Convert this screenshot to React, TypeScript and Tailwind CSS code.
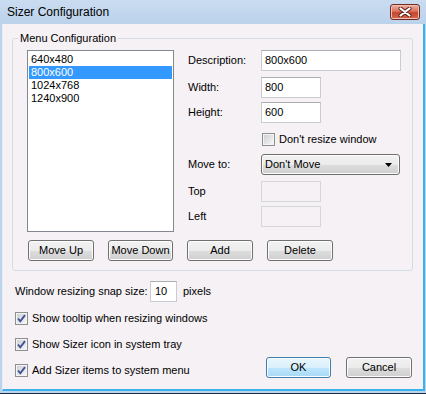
import React from "react";
import clsx from "clsx";

const btnGray =
  "border-[#707070] bg-[image:linear-gradient(#f2f2f2_0%,#ebebeb_50%,#dddddd_51%,#cfcfcf_100%)]";
const btnBlue =
  "border-[#3c7fb1] bg-[image:linear-gradient(#eaf6fd_0%,#d9f0fc_50%,#bee6fd_51%,#a7d9f5_100%)]";

function Btn({
  children,
  className,
  primary,
}: {
  children: React.ReactNode;
  className?: string;
  primary?: boolean;
}) {
  return (
    <button
      className={clsx(
        "h-[21px] shrink-0 rounded-[3px] border text-[11px] leading-none text-black shadow-[inset_0_0_0_1px_#fcfcfc]",
        primary ? btnBlue : btnGray,
        className
      )}
    >
      {children}
    </button>
  );
}

function Check({ checked, label }: { checked?: boolean; label: string }) {
  return (
    <div className="flex h-[13px] items-center">
      <span className="flex h-[13px] w-[13px] shrink-0 items-center justify-center border border-[#8e8f8f] bg-[#f4f4f4]">
        <span className="relative h-[9px] w-[9px] bg-[image:linear-gradient(135deg,#cdd0d5,#f6f6f6)]">
          {checked && (
            <svg
              className="absolute -left-[1px] -top-[1px]"
              width="11"
              height="11"
              viewBox="0 0 11 11"
            >
              <path
                d="M2 5.5 L4.3 8.3 L9 2.2"
                fill="none"
                stroke="#3d5395"
                strokeWidth="1.9"
              />
            </svg>
          )}
        </span>
      </span>
      <span className="ml-[4px] whitespace-nowrap">{label}</span>
    </div>
  );
}

function TextBox({
  value,
  className,
  disabled,
}: {
  value?: string;
  className?: string;
  disabled?: boolean;
}) {
  return (
    <div
      className={clsx(
        "flex h-[21px] items-center border pl-[3px]",
        disabled
          ? "border-[#d5d7db] bg-[#f5f1f5]"
          : "border-[#c9ccd2] border-t-[#abadb3] bg-white",
        className
      )}
    >
      {value}
    </div>
  );
}

function Row({ label, children, className }: { label: string; children: React.ReactNode; className?: string }) {
  return (
    <div className={clsx("flex items-center", className)}>
      <span className="w-[73px]">{label}</span>
      {children}
    </div>
  );
}

export default function App() {
  const sizes = ["640x480", "800x600", "1024x768", "1240x900"];
  const selected = 1;

  return (
    <div className="flex h-[394px] w-[426px] flex-col overflow-hidden border-b border-[#1a2c45] bg-[#bcd3ec] font-['Liberation_Sans',Arial,sans-serif] text-[11px] leading-[13px] text-black">
      {/* title bar */}
      <div className="flex h-[24px] shrink-0 items-center justify-between bg-[image:linear-gradient(#cadcf0,#bbd2eb)] pl-[7px] pr-[6px]">
        <span className="text-[12px]">Sizer Configuration</span>
        <div className="flex h-[16px] w-[30px] items-center justify-center rounded-[3px] border border-[#6e2a20] bg-[image:linear-gradient(#eab0a3_0%,#d9745e_45%,#c4452d_55%,#d9694e_100%)] shadow-[inset_0_0_0_1px_#f0c0b4]">
          <svg width="14" height="10" viewBox="0 0 14 10">
            <path d="M2.5 1.5 L11.5 8.5 M11.5 1.5 L2.5 8.5" stroke="#5a2018" strokeWidth="4" strokeLinecap="round" />
            <path d="M2.5 1.5 L11.5 8.5 M11.5 1.5 L2.5 8.5" stroke="#ffffff" strokeWidth="2.2" strokeLinecap="round" />
          </svg>
        </div>
      </div>

      {/* client area */}
      <div className="ml-[2px] mr-[1px] mb-[2px] flex flex-1 flex-col border-l border-r-2 border-b-2 border-l-[#e6eef6] border-r-[#3ab3ec] border-b-[#3ab3ec] bg-[#f5f1f5] pl-[9px]">
        {/* group box */}
        <div className="relative mt-[14px] h-[233px] w-[401px] rounded-[3px] border border-[#d3dde4] pl-[14px] pt-[11px]">
          <span className="absolute -top-[7px] left-[5px] bg-[#f5f1f5] px-[2px]">Menu Configuration</span>

          <div className="flex">
            <div className="h-[182px] w-[147px] shrink-0 border border-[#828790] bg-white p-[1px] pt-[2px]">
              {sizes.map((s, i) => (
                <div
                  key={s}
                  className={clsx(
                    "h-[13px] pl-[2px]",
                    i === selected ? "bg-[#3399ff] text-white" : ""
                  )}
                >
                  {s}
                </div>
              ))}
            </div>

            <div className="ml-[14px] flex flex-col">
              <Row label="Description:">
                <TextBox value="800x600" className="w-[140px]" />
              </Row>
              <Row label="Width:" className="mt-[6px]">
                <TextBox value="800" className="w-[60px]" />
              </Row>
              <Row label="Height:" className="mt-[4px]">
                <TextBox value="600" className="w-[60px]" />
              </Row>
              <div className="mt-[10px] pl-[74px]">
                <Check label="Don't resize window" />
              </div>
              <Row label="Move to:" className="mt-[8px]">
                <div className={clsx("flex h-[21px] w-[139px] items-center justify-between rounded-[3px] border pl-[3px] pr-[7px] shadow-[inset_0_0_0_1px_#fcfcfc]", btnGray)}>
                  <span>Don't Move</span>
                  <svg width="7" height="4" viewBox="0 0 7 4">
                    <path d="M0 0 H7 L3.5 4 Z" fill="#000" />
                  </svg>
                </div>
              </Row>
              <Row label="Top" className="mt-[6px]">
                <TextBox disabled className="w-[60px]" />
              </Row>
              <Row label="Left" className="mt-[4px]">
                <TextBox disabled className="w-[60px]" />
              </Row>
            </div>
          </div>

          <div className="mt-[8px] ml-[1px] flex gap-[14px]">
            <Btn className="w-[66px]">Move Up</Btn>
            <Btn className="w-[65px]">Move Down</Btn>
            <Btn className="w-[66px]">Add</Btn>
            <Btn className="w-[66px]">Delete</Btn>
          </div>
        </div>

        {/* bottom options */}
        <div className="flex flex-col pl-[3px] pr-[11px]">
          <div className="mt-[10px] flex items-center">
            <span className="w-[135px] whitespace-nowrap">Window resizing snap size:</span>
            <TextBox value="10" className="w-[27px] pl-[4px]" />
            <span className="ml-[6px]">pixels</span>
          </div>
          <div className="mt-[10px]">
            <Check checked label="Show tooltip when resizing windows" />
          </div>
          <div className="mt-[13px]">
            <Check checked label="Show Sizer icon in system tray" />
          </div>
          <div className="mt-[6px] flex items-start">
            <div className="mt-[7px]">
              <Check checked label="Add Sizer items to system menu" />
            </div>
            <div className="ml-auto flex gap-[15px]">
              <Btn primary className="w-[65px]">OK</Btn>
              <Btn className="w-[66px]">Cancel</Btn>
            </div>
          </div>
        </div>
      </div>
    </div>
  );
}
